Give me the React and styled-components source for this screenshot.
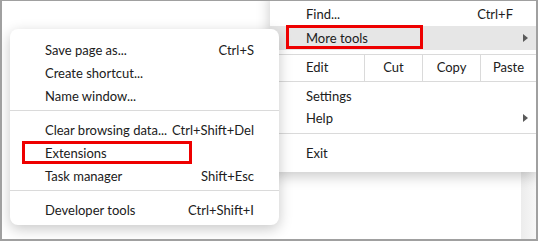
import React from "react";
import styled, { createGlobalStyle } from "styled-components";

const Global = createGlobalStyle`
  html, body { margin: 0; padding: 0; background: #fff; }
  body { font-family: Lato, "Segoe UI", "Noto Sans", sans-serif; }
  * { box-sizing: border-box; }
`;

const Frame = styled.div`
  position: relative;
  width: 538px;
  height: 241px;
  border: 2px solid #a0a0a0;
  border-top-width: 1px;
  display: flex;
  overflow: hidden;
  background: #fff;
`;

const Canvas = styled.div`
  flex: 1;
`;

const Track = styled.div`
  width: 15px;
  background: linear-gradient(to right, #ececec, #f7f7f7);
`;

const Menu = styled.div`
  position: absolute;
  background: #fff;
  color: #202020;
  font-size: 13px;
  white-space: nowrap;
  box-shadow: 0 4px 14px rgba(0, 0, 0, 0.22);
`;

const MainMenu = styled(Menu)`
  left: 268px;
  top: -11px;
  width: 266px;
  padding: 12px 0 8px;
  border-radius: 0 0 0 8px;
`;

const SubMenu = styled(Menu)`
  left: 8px;
  top: 28px;
  width: 269px;
  padding: 9px 0 4px;
  border-radius: 8px;
  z-index: 2;
`;

const Row = styled.div`
  display: flex;
  align-items: center;
  justify-content: space-between;
  height: ${(p) => p.$h || 23}px;
  padding: 0 ${(p) => p.$pr || 25}px 0 ${(p) => p.$pl || 36}px;
  background: ${(p) => (p.$active ? "#e6e6e6" : "transparent")};
`;

const Divider = styled.div`
  height: 1px;
  background: #dadada;
  margin: ${(p) => p.$m || "4px 0 7px"};
`;

const Arrow = styled.span`
  width: 0;
  height: 0;
  border-top: 4px solid transparent;
  border-bottom: 4px solid transparent;
  border-left: 5px solid #5a5a5a;
`;

const EditRow = styled.div`
  display: grid;
  grid-template-columns: 94px 58px 58px 1fr;
  height: 28px;
  border-top: 1px solid #dadada;
  border-bottom: 1px solid #dadada;
  margin: 4px 0 3px;
`;

const Cell = styled.div`
  display: flex;
  align-items: center;
  justify-content: ${(p) => (p.$label ? "flex-start" : "center")};
  padding-left: ${(p) => (p.$label ? "36px" : "0")};
  padding-bottom: 2px;
  border-left: ${(p) => (p.$label ? "none" : "1px solid #dadada")};
`;

const Highlight = styled.div`
  position: absolute;
  border: 3px solid #ee0000;
  z-index: 3;
`;

export default function App() {
  return (
    <>
      <Global />
      <Frame>
        <Canvas />
        <Track />
        <MainMenu>
          <Row $h={24} $pr={23}>
            <span>Find...</span>
            <span>Ctrl+F</span>
          </Row>
          <Row $h={24} $pr={8} $active>
            <span>More tools</span>
            <Arrow />
          </Row>
          <EditRow>
            <Cell $label>Edit</Cell>
            <Cell>Cut</Cell>
            <Cell>Copy</Cell>
            <Cell>Paste</Cell>
          </EditRow>
          <Row $h={22}>
            <span>Settings</span>
          </Row>
          <Row $h={22} $pr={8}>
            <span>Help</span>
            <Arrow />
          </Row>
          <Divider $m="4px 0 7px" />
          <Row $h={23}>
            <span>Exit</span>
          </Row>
        </MainMenu>
        <SubMenu>
          <Row $pl={35}>
            <span>Save page as...</span>
            <span>Ctrl+S</span>
          </Row>
          <Row $pl={35}>
            <span>Create shortcut...</span>
          </Row>
          <Row $pl={35}>
            <span>Name window...</span>
          </Row>
          <Divider $m="3px 0 7px" />
          <Row $pl={35}>
            <span>Clear browsing data...</span>
            <span>Ctrl+Shift+Del</span>
          </Row>
          <Row $pl={35}>
            <span>Extensions</span>
          </Row>
          <Row $pl={35}>
            <span>Task manager</span>
            <span>Shift+Esc</span>
          </Row>
          <Divider $m="3px 0 7px" />
          <Row $pl={35}>
            <span>Developer tools</span>
            <span>Ctrl+Shift+I</span>
          </Row>
        </SubMenu>
        <Highlight style={{ left: 284, top: 24, width: 137, height: 24 }} />
        <Highlight style={{ left: 20, top: 140, width: 170, height: 23 }} />
      </Frame>
    </>
  );
}
